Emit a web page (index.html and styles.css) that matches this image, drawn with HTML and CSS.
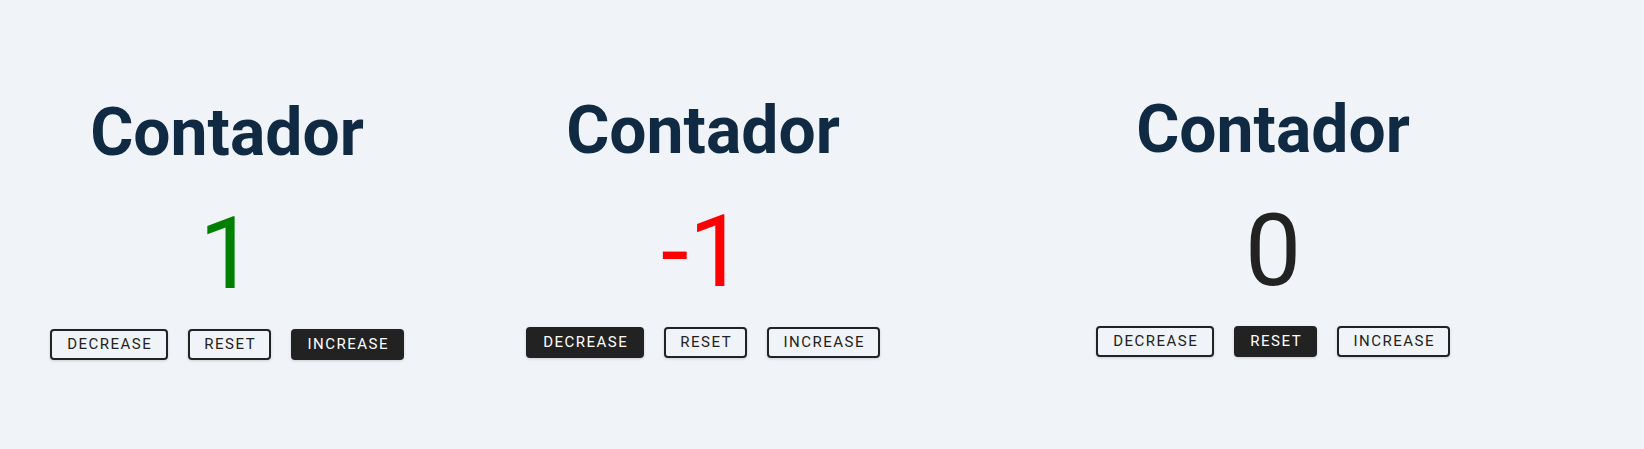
FILE: index.html
```html
<!DOCTYPE html>
<html lang="es">
<head>
<meta charset="utf-8">
<title>Contador</title>
<link rel="stylesheet" href="styles.css">
</head>
<body>
<main class="board">
  <section class="counter counter--first">
    <h1 class="counter__title">Contador</h1>
    <p class="counter__value counter__value--positive">1</p>
    <div class="counter__actions">
      <button class="btn">Decrease</button>
      <button class="btn">Reset</button>
      <button class="btn btn--active">Increase</button>
    </div>
  </section>
  <section class="counter counter--second">
    <h1 class="counter__title">Contador</h1>
    <p class="counter__value counter__value--negative">-1</p>
    <div class="counter__actions">
      <button class="btn btn--active">Decrease</button>
      <button class="btn">Reset</button>
      <button class="btn">Increase</button>
    </div>
  </section>
  <section class="counter counter--third">
    <h1 class="counter__title">Contador</h1>
    <p class="counter__value">0</p>
    <div class="counter__actions">
      <button class="btn">Decrease</button>
      <button class="btn btn--active">Reset</button>
      <button class="btn">Increase</button>
    </div>
  </section>
</main>
</body>
</html>
```

FILE: styles.css
```css
* { box-sizing: border-box; }

html, body {
  margin: 0;
  padding: 0;
  background: #f0f4f8;
  font-family: Roboto, "Liberation Sans", Arial, sans-serif;
  height: 100%;
}

.board {
  display: flex;
  align-items: flex-start;
  padding: 0 0 0 50px;
}

.counter {
  width: 354px;
  display: flex;
  flex-direction: column;
  align-items: center;
  padding-top: 91px;
}

.counter--first { padding-top: 93px; }
.counter--second { margin-left: 122px; }
.counter--third { margin-left: 216px; padding-top: 90px; }

.counter__title {
  margin: 0;
  font-size: 66px;
  line-height: 79px;
  font-weight: 700;
  color: #102a43;
}

.counter__value {
  margin: 32px 0 0;
  font-size: 100px;
  line-height: 100px;
  font-weight: 400;
  color: #222222;
}

.counter__value--positive { color: #008000; }
.counter__value--negative { color: #ff0000; }

.counter__actions {
  display: flex;
  gap: 20px;
  margin-top: 25px;
}

.btn {
  font-family: Roboto, "Liberation Sans", Arial, sans-serif;
  font-size: 15px;
  font-weight: 400;
  line-height: 15px;
  letter-spacing: 1.5px;
  text-transform: uppercase;
  color: #222222;
  background: #f0f4f8;
  border: 2px solid #222222;
  border-radius: 4px;
  padding: 6px 0 6px 1.5px;
  width: auto;
  box-shadow: 0 1px 3px rgba(0, 0, 0, 0.15);
  cursor: pointer;
}

.btn:nth-child(1) { width: 118px; }
.btn:nth-child(2) { width: 83px; }
.btn:nth-child(3) { width: 113px; }

.btn--active {
  background: #222222;
  color: #ffffff;
}
```
